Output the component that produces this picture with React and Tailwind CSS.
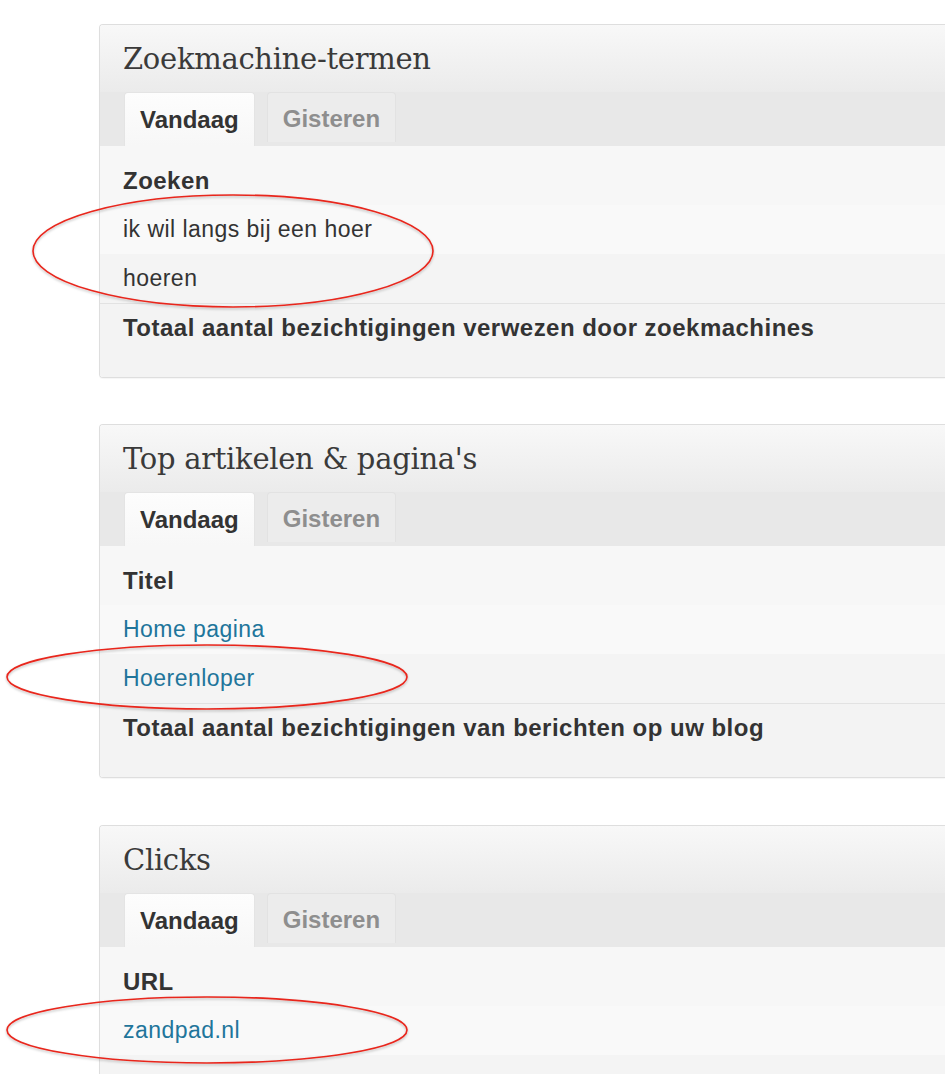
import React from 'react';

const panels = [
    {
        title: 'Zoekmachine-termen',
        head: 'Zoeken',
        rows: [
            { label: 'ik wil langs bij een hoer', link: false },
            { label: 'hoeren', link: false },
        ],
        total: 'Totaal aantal bezichtigingen verwezen door zoekmachines',
        extra: '',
    },
    {
        title: "Top artikelen & pagina's",
        head: 'Titel',
        rows: [
            { label: 'Home pagina', link: true },
            { label: 'Hoerenloper', link: true },
        ],
        total: 'Totaal aantal bezichtigingen van berichten op uw blog',
        extra: '',
    },
    {
        title: 'Clicks',
        head: 'URL',
        rows: [
            { label: 'zandpad.nl', link: true },
            { label: '', link: true },
        ],
        total: '',
        extra: 'mt-px',
    },
];

function Tabs() {
    return (
        <div className="flex items-start gap-[12px] pl-[24px] h-[54px] bg-[#e8e8e8] border-b border-[#e1e1e1] box-content -mb-px">
            <div className="h-[54px] px-[15px] pt-[12px] rounded-t-[4px] bg-gradient-to-b from-[#fdfdfd] to-[#f7f7f7] border border-b-0 border-[#e4e4e4] relative z-10">
                <span className="block leading-[30px] text-[24px] font-bold text-[#333]">Vandaag</span>
            </div>
            <div className="h-[50px] px-[15px] pt-[11px] rounded-t-[4px] bg-[#ececec] border border-b-0 border-[#e2e2e2]">
                <span className="block leading-[30px] text-[24px] font-bold text-[#8e8e8e]">Gisteren</span>
            </div>
        </div>
    );
}

function Panel({ title, head, rows, total, extra }) {
    return (
        <div className={`ml-[99px] border border-r-0 border-[#dedede] rounded-l-[4px] overflow-hidden shadow-[0_1px_1px_rgba(0,0,0,0.04)] ${extra}`}>
            <div className="h-[67px] pt-[16px] pl-[23px] bg-gradient-to-b from-[#f8f8f8] to-[#ebebeb]">
                <h3 className="leading-[36px] text-[29px] text-[#3a3a3a] font-['DejaVu_Serif',serif] tracking-[-0.01em]">{title}</h3>
            </div>
            <Tabs />
            <div className="bg-[#f7f7f7] pt-[10px] relative">
                <div className="h-[49px] pl-[23px] leading-[49px] text-[24px] font-bold text-[#333] tracking-[0.02em]">{head}</div>
                {rows.map((r, i) => (
                    <div
                        key={i}
                        className={`h-[49px] pl-[23px] leading-[49px] text-[23px] tracking-[0.02em] ${i % 2 === 0 ? 'bg-[#f9f9f9]' : 'bg-[#f4f4f4]'} ${r.link ? 'text-[#21759b]' : 'text-[#333]'}`}
                    >
                        {r.label}
                    </div>
                ))}
                <div className="border-t border-[#e2e2e2] bg-[#f3f3f3] pl-[23px] h-[74px]">
                    <div className="h-[48px] leading-[48px] text-[24px] font-bold text-[#333] tracking-[0.02em]">{total}</div>
                </div>
            </div>
        </div>
    );
}

export default function App() {
    return (
        <div className="relative w-[945px] h-[1074px] overflow-hidden bg-white font-['Liberation_Sans',Arial,sans-serif]">
            <div className="pt-[24px] flex flex-col gap-[46px]">
                {panels.map((p) => (
                    <Panel key={p.title} {...p} />
                ))}
            </div>
            <svg className="absolute inset-0 pointer-events-none" width="945" height="1074" viewBox="0 0 945 1074">
                <defs>
                    <filter id="sh" x="-10%" y="-30%" width="120%" height="160%">
                        <feDropShadow dx="0" dy="1.5" stdDeviation="1.2" floodColor="#000" floodOpacity="0.25" />
                    </filter>
                </defs>
                <g fill="none" stroke="#e8261c" strokeWidth="1.6" filter="url(#sh)">
                    <ellipse cx="233" cy="251" rx="200" ry="56" />
                    <ellipse cx="207" cy="677" rx="200" ry="32" />
                    <ellipse cx="207" cy="1030" rx="200" ry="33" />
                </g>
            </svg>
        </div>
    );
}
